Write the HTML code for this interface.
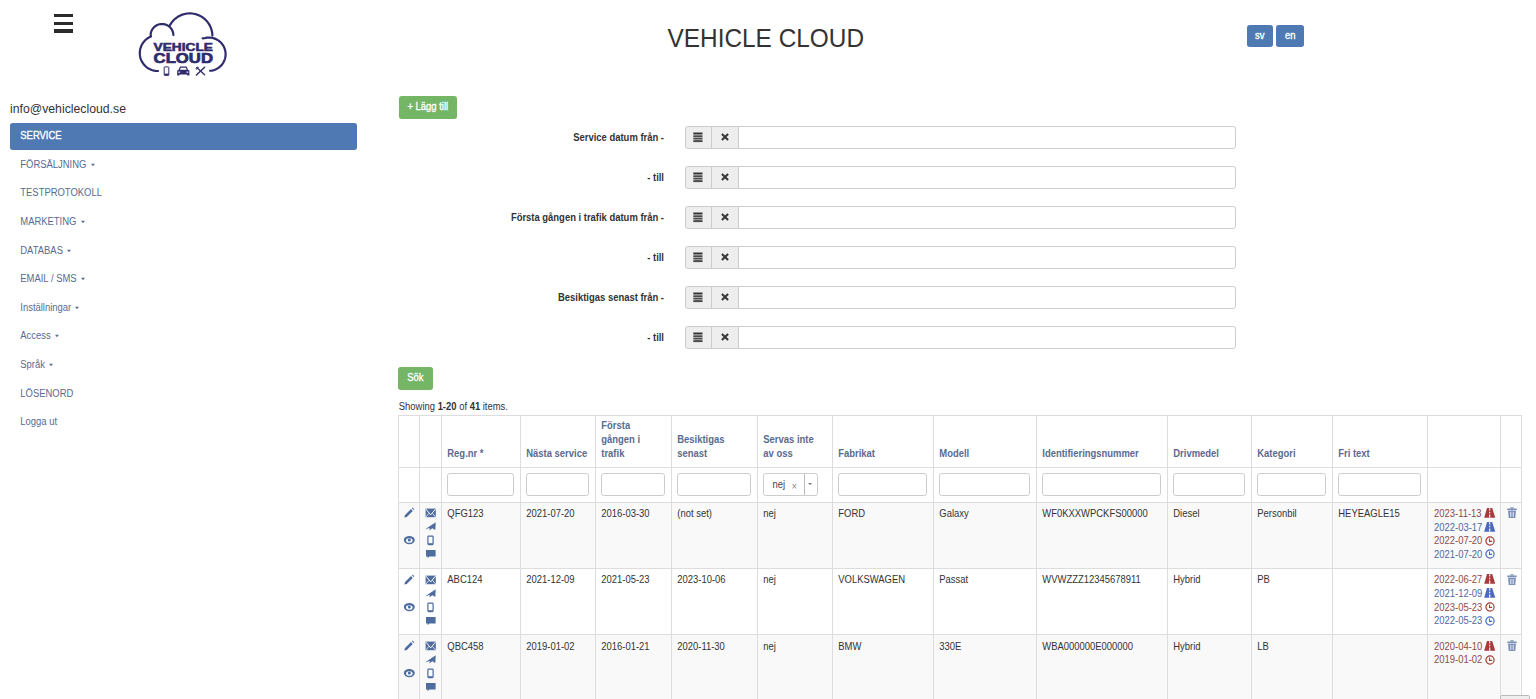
<!DOCTYPE html>
<html><head><meta charset="utf-8"><title>Vehicle Cloud</title><style>
html,body{margin:0;padding:0;background:#fff;width:1536px;height:699px;overflow:hidden;position:relative}
body{font-family:"Liberation Sans", sans-serif}
.t{position:absolute;white-space:nowrap;transform-origin:0 50%}
.r{position:absolute}
.caret{display:inline-block;width:0;height:0;margin-left:4.3px;vertical-align:middle;position:relative;top:-0.3px;border-top:2.7px solid;border-left:2.8px solid transparent;border-right:2.8px solid transparent}
.ig{position:absolute;width:551.4px;height:23px}
.ad{position:absolute;left:0;top:0;width:25.8px;height:21px;background:#eee;border:1px solid #ccc;border-radius:2.7px 0 0 2.7px}
.ad2{left:26.8px;border-radius:0}
.inp{position:absolute;left:53.6px;top:0;width:495.8px;height:21px;border:1px solid #ccc;border-radius:0 2.7px 2.7px 0;background:#fff}
.xi{position:absolute;left:7.4px;top:4.9px}
.cal{position:absolute;left:7.8px;top:5.2px}
.fi{position:absolute;height:21px;border:1px solid #ccc;border-radius:2.7px;background:#fff}
.corner{position:absolute;left:1500.4px;top:694.9px;width:28px;height:10px;background:#eee;border:1px solid #bbb;border-radius:2px}
</style></head><body>
<div class="r" style="left:54px;top:13.6px;width:19px;height:3.4px;background:#2b2b2b"></div>
<div class="r" style="left:54px;top:21.5px;width:19px;height:3.4px;background:#2b2b2b"></div>
<div class="r" style="left:54px;top:29.4px;width:19px;height:3.4px;background:#2b2b2b"></div>
<svg class="r" style="left:0;top:0" width="260" height="90" viewBox="0 0 260 90">
<g fill="none" stroke="#2f2c6c" stroke-width="2.2" stroke-linecap="round" stroke-linejoin="round">
<polyline points="158.01,71.00 156.77,70.98 155.53,70.87 154.31,70.68 153.10,70.40 151.91,70.04 150.75,69.60 149.62,69.07 148.53,68.48 147.49,67.80 146.50,67.06 145.56,66.25 144.67,65.38 143.85,64.44 143.10,63.46 142.42,62.42 141.81,61.34 141.28,60.22 140.82,59.06 140.45,57.88 140.16,56.67 139.95,55.44 139.83,54.21 139.80,52.97 139.85,51.73 139.99,50.49 140.21,49.27 140.52,48.07 140.91,46.89 141.38,45.74 141.93,44.63 142.56,43.55 143.26,42.53 144.02,41.55 144.86,40.63 145.75,39.77 146.70,38.98 147.71,38.25 148.76,37.59 149.86,37.01 150.99,36.50 150.62,34.80 150.69,33.94 150.84,33.08 151.05,32.23 151.32,31.41 151.66,30.60 152.05,29.83 152.51,29.09 153.02,28.38 153.58,27.72 154.19,27.10 154.85,26.52 155.54,26.00 156.28,25.54 157.05,25.13 157.85,24.78 158.67,24.50 159.51,24.28 160.36,24.12 161.23,24.03 162.10,24.00 162.97,24.04 163.83,24.15 164.69,24.32 165.52,24.56 166.34,24.86 167.13,25.22 167.89,25.64 168.62,26.12 169.31,26.65 169.95,27.23 170.55,27.86 171.10,28.54 171.60,29.25 172.04,30.00 172.42,30.79 172.75,31.59 173.01,32.43 173.20,33.27 173.33,34.13 173.39,35.00"/>
<polyline points="169.85,25.39 170.59,24.10 171.41,22.86 172.32,21.68 173.30,20.56 174.35,19.51 175.47,18.52 176.65,17.62 177.89,16.79 179.18,16.05 180.52,15.39 181.89,14.83 183.31,14.35 184.74,13.97 186.21,13.69 187.68,13.50 189.17,13.41 190.66,13.42 192.14,13.52 193.62,13.72 195.08,14.02 196.51,14.42 197.92,14.91 199.29,15.49 200.62,16.16 201.90,16.91 203.13,17.75 204.30,18.67 205.41,19.66 206.46,20.72 207.43,21.85 208.32,23.05 209.13,24.29 209.86,25.59 210.50,26.93 211.05,28.32 211.51,29.73 211.88,31.18 212.15,32.64 212.32,34.12 212.40,35.61"/>
<polyline points="202.6,38.3 204.42,38.24 205.78,37.92 207.15,37.70 208.54,37.61 209.93,37.63 211.31,37.76 212.68,38.01 214.02,38.38 215.33,38.85 216.59,39.44 217.80,40.12 218.94,40.91 220.02,41.79 221.02,42.75 221.94,43.80 222.76,44.92 223.49,46.10 224.12,47.34 224.64,48.63 225.05,49.96 225.35,51.32 225.53,52.70 225.60,54.08 225.55,55.47 225.39,56.85 225.11,58.22 224.71,59.55 224.21,60.85 223.60,62.10 222.89,63.29 222.08,64.42 221.18,65.48 220.19,66.46 219.13,67.35 217.99,68.15 216.79,68.86 215.54,69.46 214.24,69.95 212.90,70.33 211.54,70.60 210.16,70.76"/>
</g>
<g fill="#2f2c6c" font-family="Liberation Sans" font-weight="bold" stroke="#2f2c6c">
<text x="153.6" y="50.6" font-size="10.6" textLength="59.4" lengthAdjust="spacingAndGlyphs" stroke-width="0.55">VEHICLE</text>
<text x="153.6" y="62.6" font-size="13.9" textLength="59.4" lengthAdjust="spacingAndGlyphs" stroke-width="0.7">CLOUD</text>
</g>
<rect x="164.2" y="66.9" width="4.6" height="8.4" rx="0.6" fill="none" stroke="#2f2c6c" stroke-width="1.0"/>
<rect x="164.2" y="73.6" width="4.6" height="1.8" fill="#2f2c6c"/>
<path fill="#2f2c6c" d="M177.2,75.6 V70.6 L178.6,69.8 L180.0,66.6 H186.6 L188.0,69.8 L189.4,70.6 V75.6 H187.2 V74.6 H179.4 V75.6 Z M179.8,69.8 H186.8 L185.8,67.7 H180.8 Z"/>
<rect x="178.3" y="71.6" width="1.8" height="1.1" fill="#fff"/><rect x="186.5" y="71.6" width="1.8" height="1.1" fill="#fff"/>
<g stroke="#2f2c6c" stroke-linecap="round">
<line x1="196.4" y1="75.0" x2="204.6" y2="67.2" stroke-width="1.5"/>
<line x1="196.8" y1="67.6" x2="204.6" y2="74.8" stroke-width="1.3"/>
<path d="M195.9,68.8 L197.4,66.9 M196.6,69.4 L198.4,67.6" stroke-width="0.9"/>
</g>
</svg>
<div class="t" style="left:667.50px;top:31.50px;font-size:24.4px;line-height:14px;color:#333;font-weight:normal;transform:scaleY(1.04);">VEHICLE CLOUD</div>
<div class="r" style="left:1246.6px;top:24.6px;width:26.3px;height:22.6px;background:#4f79b2;border-radius:2.7px"></div>
<div class="r" style="left:1276px;top:24.6px;width:28.4px;height:22.6px;background:#4f79b2;border-radius:2.7px"></div>
<div class="t" style="left:1059.80px;width:400px;text-align:center;top:28.98px;font-size:9.45px;line-height:14px;color:#fff;font-weight:normal;-webkit-text-stroke:0.3px #fff;transform:scaleY(1.13);">sv</div>
<div class="t" style="left:1090.20px;width:400px;text-align:center;top:28.98px;font-size:9.45px;line-height:14px;color:#fff;font-weight:normal;-webkit-text-stroke:0.3px #fff;transform:scaleY(1.13);">en</div>
<div class="t" style="left:10.00px;top:101.51px;font-size:12.25px;line-height:14px;color:#333;font-weight:normal;transform:scaleY(1.06);">info@vehiclecloud.se</div>
<div class="r" style="left:10px;top:122.8px;width:347px;height:26.8px;background:#4f79b2;border-radius:2.7px"></div>
<div class="t" style="left:20.30px;top:129.08px;font-size:9.45px;line-height:14px;color:#fff;font-weight:normal;-webkit-text-stroke:0.3px #fff;transform:scaleY(1.13);">SERVICE</div>
<div class="t" style="left:20.30px;top:157.70px;font-size:9.45px;line-height:14px;color:#596b90;font-weight:normal;transform:scaleY(1.13);">FÖRSÄLJNING<span class="caret"></span></div>
<div class="t" style="left:20.30px;top:186.32px;font-size:9.45px;line-height:14px;color:#596b90;font-weight:normal;transform:scaleY(1.13);">TESTPROTOKOLL</div>
<div class="t" style="left:20.30px;top:214.94px;font-size:9.45px;line-height:14px;color:#596b90;font-weight:normal;transform:scaleY(1.13);">MARKETING<span class="caret"></span></div>
<div class="t" style="left:20.30px;top:243.56px;font-size:9.45px;line-height:14px;color:#596b90;font-weight:normal;transform:scaleY(1.13);">DATABAS<span class="caret"></span></div>
<div class="t" style="left:20.30px;top:272.18px;font-size:9.45px;line-height:14px;color:#596b90;font-weight:normal;transform:scaleY(1.13);">EMAIL / SMS<span class="caret"></span></div>
<div class="t" style="left:20.30px;top:300.80px;font-size:9.45px;line-height:14px;color:#596b90;font-weight:normal;transform:scaleY(1.13);">Inställningar<span class="caret"></span></div>
<div class="t" style="left:20.30px;top:329.42px;font-size:9.45px;line-height:14px;color:#596b90;font-weight:normal;transform:scaleY(1.13);">Access<span class="caret"></span></div>
<div class="t" style="left:20.30px;top:358.04px;font-size:9.45px;line-height:14px;color:#596b90;font-weight:normal;transform:scaleY(1.13);">Språk<span class="caret"></span></div>
<div class="t" style="left:20.30px;top:386.66px;font-size:9.45px;line-height:14px;color:#596b90;font-weight:normal;transform:scaleY(1.13);">LÖSENORD</div>
<div class="t" style="left:20.30px;top:415.28px;font-size:9.45px;line-height:14px;color:#596b90;font-weight:normal;transform:scaleY(1.13);">Logga ut</div>
<div class="r" style="left:398.6px;top:95.7px;width:58.4px;height:23.2px;background:#74b566;border-radius:2.7px"></div>
<div class="t" style="left:227.80px;width:400px;text-align:center;top:100.28px;font-size:9.45px;line-height:14px;color:#fff;font-weight:normal;-webkit-text-stroke:0.3px #fff;transform:scaleY(1.13);">+ Lägg till</div>
<div class="t" style="right:872.00px;text-align:right;top:130.98px;font-size:9.45px;line-height:14px;color:#333;font-weight:bold;transform:scaleY(1.13);">Service datum från -</div>
<div class="ig" style="left:684.6px;top:126.00px"><div class="ad"><svg class="cal" width="10" height="11" viewBox="0 0 10 11"><rect x="0.3" y="0.5" width="9.2" height="2.0" fill="#333"/><rect x="0.3" y="3.3" width="9.2" height="1.8" fill="#4a4a4a"/><rect x="0.3" y="5.7" width="9.2" height="1.8" fill="#4a4a4a"/><rect x="0.3" y="8.1" width="9.2" height="2.0" fill="#4a4a4a"/></svg></div><div class="ad ad2"><svg class="xi" width="10" height="10" viewBox="0 0 10 10"><path d="M1.9,1.9 L8.1,8.1 M8.1,1.9 L1.9,8.1" stroke="#383838" stroke-width="2.1"/></svg></div><div class="inp"></div></div>
<div class="t" style="right:872.00px;text-align:right;top:170.98px;font-size:9.45px;line-height:14px;color:#333;font-weight:bold;transform:scaleY(1.13);">- till</div>
<div class="ig" style="left:684.6px;top:166.00px"><div class="ad"><svg class="cal" width="10" height="11" viewBox="0 0 10 11"><rect x="0.3" y="0.5" width="9.2" height="2.0" fill="#333"/><rect x="0.3" y="3.3" width="9.2" height="1.8" fill="#4a4a4a"/><rect x="0.3" y="5.7" width="9.2" height="1.8" fill="#4a4a4a"/><rect x="0.3" y="8.1" width="9.2" height="2.0" fill="#4a4a4a"/></svg></div><div class="ad ad2"><svg class="xi" width="10" height="10" viewBox="0 0 10 10"><path d="M1.9,1.9 L8.1,8.1 M8.1,1.9 L1.9,8.1" stroke="#383838" stroke-width="2.1"/></svg></div><div class="inp"></div></div>
<div class="t" style="right:872.00px;text-align:right;top:210.98px;font-size:9.45px;line-height:14px;color:#333;font-weight:bold;transform:scaleY(1.13);">Första gången i trafik datum från -</div>
<div class="ig" style="left:684.6px;top:206.00px"><div class="ad"><svg class="cal" width="10" height="11" viewBox="0 0 10 11"><rect x="0.3" y="0.5" width="9.2" height="2.0" fill="#333"/><rect x="0.3" y="3.3" width="9.2" height="1.8" fill="#4a4a4a"/><rect x="0.3" y="5.7" width="9.2" height="1.8" fill="#4a4a4a"/><rect x="0.3" y="8.1" width="9.2" height="2.0" fill="#4a4a4a"/></svg></div><div class="ad ad2"><svg class="xi" width="10" height="10" viewBox="0 0 10 10"><path d="M1.9,1.9 L8.1,8.1 M8.1,1.9 L1.9,8.1" stroke="#383838" stroke-width="2.1"/></svg></div><div class="inp"></div></div>
<div class="t" style="right:872.00px;text-align:right;top:250.98px;font-size:9.45px;line-height:14px;color:#333;font-weight:bold;transform:scaleY(1.13);">- till</div>
<div class="ig" style="left:684.6px;top:246.00px"><div class="ad"><svg class="cal" width="10" height="11" viewBox="0 0 10 11"><rect x="0.3" y="0.5" width="9.2" height="2.0" fill="#333"/><rect x="0.3" y="3.3" width="9.2" height="1.8" fill="#4a4a4a"/><rect x="0.3" y="5.7" width="9.2" height="1.8" fill="#4a4a4a"/><rect x="0.3" y="8.1" width="9.2" height="2.0" fill="#4a4a4a"/></svg></div><div class="ad ad2"><svg class="xi" width="10" height="10" viewBox="0 0 10 10"><path d="M1.9,1.9 L8.1,8.1 M8.1,1.9 L1.9,8.1" stroke="#383838" stroke-width="2.1"/></svg></div><div class="inp"></div></div>
<div class="t" style="right:872.00px;text-align:right;top:290.98px;font-size:9.45px;line-height:14px;color:#333;font-weight:bold;transform:scaleY(1.13);">Besiktigas senast från -</div>
<div class="ig" style="left:684.6px;top:286.00px"><div class="ad"><svg class="cal" width="10" height="11" viewBox="0 0 10 11"><rect x="0.3" y="0.5" width="9.2" height="2.0" fill="#333"/><rect x="0.3" y="3.3" width="9.2" height="1.8" fill="#4a4a4a"/><rect x="0.3" y="5.7" width="9.2" height="1.8" fill="#4a4a4a"/><rect x="0.3" y="8.1" width="9.2" height="2.0" fill="#4a4a4a"/></svg></div><div class="ad ad2"><svg class="xi" width="10" height="10" viewBox="0 0 10 10"><path d="M1.9,1.9 L8.1,8.1 M8.1,1.9 L1.9,8.1" stroke="#383838" stroke-width="2.1"/></svg></div><div class="inp"></div></div>
<div class="t" style="right:872.00px;text-align:right;top:330.98px;font-size:9.45px;line-height:14px;color:#333;font-weight:bold;transform:scaleY(1.13);">- till</div>
<div class="ig" style="left:684.6px;top:326.00px"><div class="ad"><svg class="cal" width="10" height="11" viewBox="0 0 10 11"><rect x="0.3" y="0.5" width="9.2" height="2.0" fill="#333"/><rect x="0.3" y="3.3" width="9.2" height="1.8" fill="#4a4a4a"/><rect x="0.3" y="5.7" width="9.2" height="1.8" fill="#4a4a4a"/><rect x="0.3" y="8.1" width="9.2" height="2.0" fill="#4a4a4a"/></svg></div><div class="ad ad2"><svg class="xi" width="10" height="10" viewBox="0 0 10 10"><path d="M1.9,1.9 L8.1,8.1 M8.1,1.9 L1.9,8.1" stroke="#383838" stroke-width="2.1"/></svg></div><div class="inp"></div></div>
<div class="r" style="left:398.2px;top:367.2px;width:34.4px;height:22.6px;background:#74b566;border-radius:2.7px"></div>
<div class="t" style="left:215.40px;width:400px;text-align:center;top:371.38px;font-size:9.45px;line-height:14px;color:#fff;font-weight:normal;-webkit-text-stroke:0.3px #fff;transform:scaleY(1.13);">Sök</div>
<div class="t" style="left:398.80px;top:399.78px;font-size:9.45px;line-height:14px;color:#333;font-weight:normal;transform:scaleY(1.13);">Showing <b>1-20</b> of <b>41</b> items.</div>
<div class="r" style="left:398px;top:502px;width:1122px;height:66px;background:#f9f9f9"></div>
<div class="r" style="left:398px;top:634px;width:1122px;height:70px;background:#f9f9f9"></div>
<div class="r" style="left:398px;top:415px;width:1px;height:289px;background:#ddd"></div>
<div class="r" style="left:419px;top:415px;width:1px;height:289px;background:#ddd"></div>
<div class="r" style="left:441px;top:415px;width:1px;height:289px;background:#ddd"></div>
<div class="r" style="left:520px;top:415px;width:1px;height:289px;background:#ddd"></div>
<div class="r" style="left:595px;top:415px;width:1px;height:289px;background:#ddd"></div>
<div class="r" style="left:671px;top:415px;width:1px;height:289px;background:#ddd"></div>
<div class="r" style="left:757px;top:415px;width:1px;height:289px;background:#ddd"></div>
<div class="r" style="left:832px;top:415px;width:1px;height:289px;background:#ddd"></div>
<div class="r" style="left:933px;top:415px;width:1px;height:289px;background:#ddd"></div>
<div class="r" style="left:1036px;top:415px;width:1px;height:289px;background:#ddd"></div>
<div class="r" style="left:1167px;top:415px;width:1px;height:289px;background:#ddd"></div>
<div class="r" style="left:1251px;top:415px;width:1px;height:289px;background:#ddd"></div>
<div class="r" style="left:1332px;top:415px;width:1px;height:289px;background:#ddd"></div>
<div class="r" style="left:1427px;top:415px;width:1px;height:289px;background:#ddd"></div>
<div class="r" style="left:1500px;top:415px;width:1px;height:289px;background:#ddd"></div>
<div class="r" style="left:1521px;top:415px;width:1px;height:289px;background:#ddd"></div>
<div class="r" style="left:398px;top:415px;width:1124px;height:1px;background:#ddd"></div>
<div class="r" style="left:398px;top:467px;width:1124px;height:1px;background:#ddd"></div>
<div class="r" style="left:398px;top:502px;width:1124px;height:1px;background:#ddd"></div>
<div class="r" style="left:398px;top:568px;width:1124px;height:1px;background:#ddd"></div>
<div class="r" style="left:398px;top:634px;width:1124px;height:1px;background:#ddd"></div>
<div class="t" style="left:447.30px;top:447.28px;font-size:9.45px;line-height:14px;color:#596b90;font-weight:bold;transform:scaleY(1.13);">Reg.nr *</div>
<div class="t" style="left:526.30px;top:447.28px;font-size:9.45px;line-height:14px;color:#596b90;font-weight:bold;transform:scaleY(1.13);">Nästa service</div>
<div class="t" style="left:601.30px;top:419.28px;font-size:9.45px;line-height:14px;color:#596b90;font-weight:bold;transform:scaleY(1.13);">Första</div>
<div class="t" style="left:601.30px;top:433.28px;font-size:9.45px;line-height:14px;color:#596b90;font-weight:bold;transform:scaleY(1.13);">gången i</div>
<div class="t" style="left:601.30px;top:447.28px;font-size:9.45px;line-height:14px;color:#596b90;font-weight:bold;transform:scaleY(1.13);">trafik</div>
<div class="t" style="left:677.30px;top:433.28px;font-size:9.45px;line-height:14px;color:#596b90;font-weight:bold;transform:scaleY(1.13);">Besiktigas</div>
<div class="t" style="left:677.30px;top:447.28px;font-size:9.45px;line-height:14px;color:#596b90;font-weight:bold;transform:scaleY(1.13);">senast</div>
<div class="t" style="left:763.30px;top:433.28px;font-size:9.45px;line-height:14px;color:#596b90;font-weight:bold;transform:scaleY(1.13);">Servas inte</div>
<div class="t" style="left:763.30px;top:447.28px;font-size:9.45px;line-height:14px;color:#596b90;font-weight:bold;transform:scaleY(1.13);">av oss</div>
<div class="t" style="left:838.30px;top:447.28px;font-size:9.45px;line-height:14px;color:#596b90;font-weight:bold;transform:scaleY(1.13);">Fabrikat</div>
<div class="t" style="left:939.30px;top:447.28px;font-size:9.45px;line-height:14px;color:#596b90;font-weight:bold;transform:scaleY(1.13);">Modell</div>
<div class="t" style="left:1042.30px;top:447.28px;font-size:9.45px;line-height:14px;color:#596b90;font-weight:bold;transform:scaleY(1.13);">Identifieringsnummer</div>
<div class="t" style="left:1173.30px;top:447.28px;font-size:9.45px;line-height:14px;color:#596b90;font-weight:bold;transform:scaleY(1.13);">Drivmedel</div>
<div class="t" style="left:1257.30px;top:447.28px;font-size:9.45px;line-height:14px;color:#596b90;font-weight:bold;transform:scaleY(1.13);">Kategori</div>
<div class="t" style="left:1338.30px;top:447.28px;font-size:9.45px;line-height:14px;color:#596b90;font-weight:bold;transform:scaleY(1.13);">Fri text</div>
<div class="fi" style="left:446.8px;top:473px;width:65.6px"></div>
<div class="fi" style="left:525.8px;top:473px;width:61.6px"></div>
<div class="fi" style="left:600.8px;top:473px;width:62.6px"></div>
<div class="fi" style="left:676.8px;top:473px;width:72.6px"></div>
<div class="fi" style="left:837.8px;top:473px;width:87.6px"></div>
<div class="fi" style="left:938.8px;top:473px;width:89.6px"></div>
<div class="fi" style="left:1041.8px;top:473px;width:117.6px"></div>
<div class="fi" style="left:1172.8px;top:473px;width:70.6px"></div>
<div class="fi" style="left:1256.8px;top:473px;width:67.6px"></div>
<div class="fi" style="left:1337.8px;top:473px;width:81.6px"></div>
<div class="fi" style="left:763.3px;top:473px;width:52.6px"></div>
<div class="r" style="left:804px;top:474px;width:1px;height:21px;background:#bbb"></div>
<div class="t" style="left:772.60px;top:477.58px;font-size:9.45px;line-height:14px;color:#444;font-weight:normal;transform:scaleY(1.13);">nej</div>
<div class="t" style="left:791.60px;top:479.76px;font-size:9.5px;line-height:14px;color:#888;font-weight:normal;transform:scaleY(1.13);">&#215;</div>
<div class="r" style="left:808.3px;top:483.2px;width:0;height:0;border-left:2.2px solid transparent;border-right:2.2px solid transparent;border-top:2.6px solid #777"></div>
<div class="t" style="left:447.30px;top:507.08px;font-size:9.45px;line-height:14px;color:#333;font-weight:normal;transform:scaleY(1.13);">QFG123</div>
<div class="t" style="left:526.30px;top:507.08px;font-size:9.45px;line-height:14px;color:#333;font-weight:normal;transform:scaleY(1.13);">2021-07-20</div>
<div class="t" style="left:601.30px;top:507.08px;font-size:9.45px;line-height:14px;color:#333;font-weight:normal;transform:scaleY(1.13);">2016-03-30</div>
<div class="t" style="left:677.30px;top:507.08px;font-size:9.45px;line-height:14px;color:#333;font-weight:normal;transform:scaleY(1.13);">(not set)</div>
<div class="t" style="left:763.30px;top:507.08px;font-size:9.45px;line-height:14px;color:#333;font-weight:normal;transform:scaleY(1.13);">nej</div>
<div class="t" style="left:838.30px;top:507.08px;font-size:9.45px;line-height:14px;color:#333;font-weight:normal;transform:scaleY(1.13);">FORD</div>
<div class="t" style="left:939.30px;top:507.08px;font-size:9.45px;line-height:14px;color:#333;font-weight:normal;transform:scaleY(1.13);">Galaxy</div>
<div class="t" style="left:1042.30px;top:507.08px;font-size:9.45px;line-height:14px;color:#333;font-weight:normal;transform:scaleY(1.13);">WF0KXXWPCKFS00000</div>
<div class="t" style="left:1173.30px;top:507.08px;font-size:9.45px;line-height:14px;color:#333;font-weight:normal;transform:scaleY(1.13);">Diesel</div>
<div class="t" style="left:1257.30px;top:507.08px;font-size:9.45px;line-height:14px;color:#333;font-weight:normal;transform:scaleY(1.13);">Personbil</div>
<div class="t" style="left:1338.30px;top:507.08px;font-size:9.45px;line-height:14px;color:#333;font-weight:normal;transform:scaleY(1.13);">HEYEAGLE15</div>
<svg class="r" style="left:398px;top:502.3px" width="44" height="66" viewBox="0 0 44 66"><g fill="#4e6c9e"><path d="M6.3,15.6 L7.0,13.1 L13.0,7.1 L14.8,8.9 L8.8,14.9 Z M13.9,6.2 L14.6,5.5 L16.4,7.3 L15.7,8.0 Z"/><ellipse cx="11.3" cy="38.1" rx="5.5" ry="4.1"/><rect x="27.6" y="6.6" width="10.2" height="8.6"/><path d="M27.2,27.2 L37.7,20.2 L37.3,28.1 L34.3,26.3 L31.4,28.4 L31.8,26.0 Z"/><path d="M28.0,48.0 H37.6 V54.4 H31.4 L29.6,56.2 V54.4 H28.0 Z"/></g><ellipse cx="11.3" cy="38.5" rx="3.3" ry="2.3" fill="#f9f9f9"/><circle cx="11.3" cy="38.0" r="1.5" fill="#4e6c9e"/><path d="M27.9,7.1 L32.7,12.9 L37.5,7.1" stroke="#f9f9f9" stroke-width="1.0" fill="none"/><path d="M27.9,15.0 L30.9,11.4 M37.5,15.0 L34.5,11.4" stroke="#f9f9f9" stroke-width="0.8" fill="none"/><rect x="29.9" y="34.2" width="5.2" height="8.4" rx="0.8" fill="none" stroke="#4e6c9e" stroke-width="1.2"/><rect x="30.2" y="41.2" width="4.6" height="1.4" fill="#4e6c9e"/></svg>
<div class="t" style="left:1434.00px;top:507.08px;font-size:9.45px;line-height:14px;color:#8f4a4a;font-weight:normal;transform:scaleY(1.13);">2023-11-13</div>
<svg class="r" style="left:1483.6px;top:508.1px" width="12" height="10" viewBox="0 0 12 10"><path d="M3.0,0 H8.2 L11.2,9.7 H0.2 Z" fill="#a83a3a"/><path d="M5.7,0.2 V2.6 M5.7,3.8 V5.2 M5.7,6.4 V9.7" stroke="#f9f9f9" stroke-width="1.2"/></svg>
<div class="t" style="left:1434.00px;top:520.68px;font-size:9.45px;line-height:14px;color:#5068a0;font-weight:normal;transform:scaleY(1.13);">2022-03-17</div>
<svg class="r" style="left:1483.6px;top:521.7px" width="12" height="10" viewBox="0 0 12 10"><path d="M3.0,0 H8.2 L11.2,9.7 H0.2 Z" fill="#4a68c0"/><path d="M5.7,0.2 V2.6 M5.7,3.8 V5.2 M5.7,6.4 V9.7" stroke="#f9f9f9" stroke-width="1.2"/></svg>
<div class="t" style="left:1434.00px;top:534.28px;font-size:9.45px;line-height:14px;color:#8f4a4a;font-weight:normal;transform:scaleY(1.13);">2022-07-20</div>
<svg class="r" style="left:1484.8px;top:535.8px" width="10" height="10" viewBox="0 0 10 10"><circle cx="5" cy="5" r="4.1" fill="none" stroke="#a83a3a" stroke-width="1.2"/><path d="M4.5,2.5 V5.4 H7.1" fill="none" stroke="#a83a3a" stroke-width="1.1"/></svg>
<div class="t" style="left:1434.00px;top:547.88px;font-size:9.45px;line-height:14px;color:#5068a0;font-weight:normal;transform:scaleY(1.13);">2021-07-20</div>
<svg class="r" style="left:1484.8px;top:549.4px" width="10" height="10" viewBox="0 0 10 10"><circle cx="5" cy="5" r="4.1" fill="none" stroke="#4a68c0" stroke-width="1.2"/><path d="M4.5,2.5 V5.4 H7.1" fill="none" stroke="#4a68c0" stroke-width="1.1"/></svg>
<svg class="r" style="left:1506.8px;top:507.3px" width="10" height="12" viewBox="0 0 10 12"><g fill="#7b8fb8"><rect x="3.4" y="0.3" width="3.2" height="1.3"/><rect x="0.3" y="1.5" width="9.4" height="1.7"/><path d="M1.1,3.8 H8.9 L8.3,10.9 H1.7 Z"/></g><g stroke="#f9f9f9" stroke-width="0.6"><line x1="3.5" y1="5" x2="3.5" y2="10"/><line x1="5" y1="5" x2="5" y2="10"/><line x1="6.5" y1="5" x2="6.5" y2="10"/></g></svg>
<div class="t" style="left:447.30px;top:573.38px;font-size:9.45px;line-height:14px;color:#333;font-weight:normal;transform:scaleY(1.13);">ABC124</div>
<div class="t" style="left:526.30px;top:573.38px;font-size:9.45px;line-height:14px;color:#333;font-weight:normal;transform:scaleY(1.13);">2021-12-09</div>
<div class="t" style="left:601.30px;top:573.38px;font-size:9.45px;line-height:14px;color:#333;font-weight:normal;transform:scaleY(1.13);">2021-05-23</div>
<div class="t" style="left:677.30px;top:573.38px;font-size:9.45px;line-height:14px;color:#333;font-weight:normal;transform:scaleY(1.13);">2023-10-06</div>
<div class="t" style="left:763.30px;top:573.38px;font-size:9.45px;line-height:14px;color:#333;font-weight:normal;transform:scaleY(1.13);">nej</div>
<div class="t" style="left:838.30px;top:573.38px;font-size:9.45px;line-height:14px;color:#333;font-weight:normal;transform:scaleY(1.13);">VOLKSWAGEN</div>
<div class="t" style="left:939.30px;top:573.38px;font-size:9.45px;line-height:14px;color:#333;font-weight:normal;transform:scaleY(1.13);">Passat</div>
<div class="t" style="left:1042.30px;top:573.38px;font-size:9.45px;line-height:14px;color:#333;font-weight:normal;transform:scaleY(1.13);">WVWZZZ12345678911</div>
<div class="t" style="left:1173.30px;top:573.38px;font-size:9.45px;line-height:14px;color:#333;font-weight:normal;transform:scaleY(1.13);">Hybrid</div>
<div class="t" style="left:1257.30px;top:573.38px;font-size:9.45px;line-height:14px;color:#333;font-weight:normal;transform:scaleY(1.13);">PB</div>
<svg class="r" style="left:398px;top:568.6px" width="44" height="66" viewBox="0 0 44 66"><g fill="#4e6c9e"><path d="M6.3,15.6 L7.0,13.1 L13.0,7.1 L14.8,8.9 L8.8,14.9 Z M13.9,6.2 L14.6,5.5 L16.4,7.3 L15.7,8.0 Z"/><ellipse cx="11.3" cy="38.1" rx="5.5" ry="4.1"/><rect x="27.6" y="6.6" width="10.2" height="8.6"/><path d="M27.2,27.2 L37.7,20.2 L37.3,28.1 L34.3,26.3 L31.4,28.4 L31.8,26.0 Z"/><path d="M28.0,48.0 H37.6 V54.4 H31.4 L29.6,56.2 V54.4 H28.0 Z"/></g><ellipse cx="11.3" cy="38.5" rx="3.3" ry="2.3" fill="#fff"/><circle cx="11.3" cy="38.0" r="1.5" fill="#4e6c9e"/><path d="M27.9,7.1 L32.7,12.9 L37.5,7.1" stroke="#fff" stroke-width="1.0" fill="none"/><path d="M27.9,15.0 L30.9,11.4 M37.5,15.0 L34.5,11.4" stroke="#fff" stroke-width="0.8" fill="none"/><rect x="29.9" y="34.2" width="5.2" height="8.4" rx="0.8" fill="none" stroke="#4e6c9e" stroke-width="1.2"/><rect x="30.2" y="41.2" width="4.6" height="1.4" fill="#4e6c9e"/></svg>
<div class="t" style="left:1434.00px;top:573.38px;font-size:9.45px;line-height:14px;color:#8f4a4a;font-weight:normal;transform:scaleY(1.13);">2022-06-27</div>
<svg class="r" style="left:1483.6px;top:574.4px" width="12" height="10" viewBox="0 0 12 10"><path d="M3.0,0 H8.2 L11.2,9.7 H0.2 Z" fill="#a83a3a"/><path d="M5.7,0.2 V2.6 M5.7,3.8 V5.2 M5.7,6.4 V9.7" stroke="#fff" stroke-width="1.2"/></svg>
<div class="t" style="left:1434.00px;top:586.98px;font-size:9.45px;line-height:14px;color:#5068a0;font-weight:normal;transform:scaleY(1.13);">2021-12-09</div>
<svg class="r" style="left:1483.6px;top:588.0px" width="12" height="10" viewBox="0 0 12 10"><path d="M3.0,0 H8.2 L11.2,9.7 H0.2 Z" fill="#4a68c0"/><path d="M5.7,0.2 V2.6 M5.7,3.8 V5.2 M5.7,6.4 V9.7" stroke="#fff" stroke-width="1.2"/></svg>
<div class="t" style="left:1434.00px;top:600.58px;font-size:9.45px;line-height:14px;color:#8f4a4a;font-weight:normal;transform:scaleY(1.13);">2023-05-23</div>
<svg class="r" style="left:1484.8px;top:602.1px" width="10" height="10" viewBox="0 0 10 10"><circle cx="5" cy="5" r="4.1" fill="none" stroke="#a83a3a" stroke-width="1.2"/><path d="M4.5,2.5 V5.4 H7.1" fill="none" stroke="#a83a3a" stroke-width="1.1"/></svg>
<div class="t" style="left:1434.00px;top:614.18px;font-size:9.45px;line-height:14px;color:#5068a0;font-weight:normal;transform:scaleY(1.13);">2022-05-23</div>
<svg class="r" style="left:1484.8px;top:615.7px" width="10" height="10" viewBox="0 0 10 10"><circle cx="5" cy="5" r="4.1" fill="none" stroke="#4a68c0" stroke-width="1.2"/><path d="M4.5,2.5 V5.4 H7.1" fill="none" stroke="#4a68c0" stroke-width="1.1"/></svg>
<svg class="r" style="left:1506.8px;top:573.6px" width="10" height="12" viewBox="0 0 10 12"><g fill="#7b8fb8"><rect x="3.4" y="0.3" width="3.2" height="1.3"/><rect x="0.3" y="1.5" width="9.4" height="1.7"/><path d="M1.1,3.8 H8.9 L8.3,10.9 H1.7 Z"/></g><g stroke="#fff" stroke-width="0.6"><line x1="3.5" y1="5" x2="3.5" y2="10"/><line x1="5" y1="5" x2="5" y2="10"/><line x1="6.5" y1="5" x2="6.5" y2="10"/></g></svg>
<div class="t" style="left:447.30px;top:639.68px;font-size:9.45px;line-height:14px;color:#333;font-weight:normal;transform:scaleY(1.13);">QBC458</div>
<div class="t" style="left:526.30px;top:639.68px;font-size:9.45px;line-height:14px;color:#333;font-weight:normal;transform:scaleY(1.13);">2019-01-02</div>
<div class="t" style="left:601.30px;top:639.68px;font-size:9.45px;line-height:14px;color:#333;font-weight:normal;transform:scaleY(1.13);">2016-01-21</div>
<div class="t" style="left:677.30px;top:639.68px;font-size:9.45px;line-height:14px;color:#333;font-weight:normal;transform:scaleY(1.13);">2020-11-30</div>
<div class="t" style="left:763.30px;top:639.68px;font-size:9.45px;line-height:14px;color:#333;font-weight:normal;transform:scaleY(1.13);">nej</div>
<div class="t" style="left:838.30px;top:639.68px;font-size:9.45px;line-height:14px;color:#333;font-weight:normal;transform:scaleY(1.13);">BMW</div>
<div class="t" style="left:939.30px;top:639.68px;font-size:9.45px;line-height:14px;color:#333;font-weight:normal;transform:scaleY(1.13);">330E</div>
<div class="t" style="left:1042.30px;top:639.68px;font-size:9.45px;line-height:14px;color:#333;font-weight:normal;transform:scaleY(1.13);">WBA000000E000000</div>
<div class="t" style="left:1173.30px;top:639.68px;font-size:9.45px;line-height:14px;color:#333;font-weight:normal;transform:scaleY(1.13);">Hybrid</div>
<div class="t" style="left:1257.30px;top:639.68px;font-size:9.45px;line-height:14px;color:#333;font-weight:normal;transform:scaleY(1.13);">LB</div>
<svg class="r" style="left:398px;top:634.9px" width="44" height="66" viewBox="0 0 44 66"><g fill="#4e6c9e"><path d="M6.3,15.6 L7.0,13.1 L13.0,7.1 L14.8,8.9 L8.8,14.9 Z M13.9,6.2 L14.6,5.5 L16.4,7.3 L15.7,8.0 Z"/><ellipse cx="11.3" cy="38.1" rx="5.5" ry="4.1"/><rect x="27.6" y="6.6" width="10.2" height="8.6"/><path d="M27.2,27.2 L37.7,20.2 L37.3,28.1 L34.3,26.3 L31.4,28.4 L31.8,26.0 Z"/><path d="M28.0,48.0 H37.6 V54.4 H31.4 L29.6,56.2 V54.4 H28.0 Z"/></g><ellipse cx="11.3" cy="38.5" rx="3.3" ry="2.3" fill="#f9f9f9"/><circle cx="11.3" cy="38.0" r="1.5" fill="#4e6c9e"/><path d="M27.9,7.1 L32.7,12.9 L37.5,7.1" stroke="#f9f9f9" stroke-width="1.0" fill="none"/><path d="M27.9,15.0 L30.9,11.4 M37.5,15.0 L34.5,11.4" stroke="#f9f9f9" stroke-width="0.8" fill="none"/><rect x="29.9" y="34.2" width="5.2" height="8.4" rx="0.8" fill="none" stroke="#4e6c9e" stroke-width="1.2"/><rect x="30.2" y="41.2" width="4.6" height="1.4" fill="#4e6c9e"/></svg>
<div class="t" style="left:1434.00px;top:639.68px;font-size:9.45px;line-height:14px;color:#8f4a4a;font-weight:normal;transform:scaleY(1.13);">2020-04-10</div>
<svg class="r" style="left:1483.6px;top:640.7px" width="12" height="10" viewBox="0 0 12 10"><path d="M3.0,0 H8.2 L11.2,9.7 H0.2 Z" fill="#a83a3a"/><path d="M5.7,0.2 V2.6 M5.7,3.8 V5.2 M5.7,6.4 V9.7" stroke="#f9f9f9" stroke-width="1.2"/></svg>
<div class="t" style="left:1434.00px;top:653.28px;font-size:9.45px;line-height:14px;color:#8f4a4a;font-weight:normal;transform:scaleY(1.13);">2019-01-02</div>
<svg class="r" style="left:1484.8px;top:654.8px" width="10" height="10" viewBox="0 0 10 10"><circle cx="5" cy="5" r="4.1" fill="none" stroke="#a83a3a" stroke-width="1.2"/><path d="M4.5,2.5 V5.4 H7.1" fill="none" stroke="#a83a3a" stroke-width="1.1"/></svg>
<svg class="r" style="left:1506.8px;top:639.9px" width="10" height="12" viewBox="0 0 10 12"><g fill="#7b8fb8"><rect x="3.4" y="0.3" width="3.2" height="1.3"/><rect x="0.3" y="1.5" width="9.4" height="1.7"/><path d="M1.1,3.8 H8.9 L8.3,10.9 H1.7 Z"/></g><g stroke="#f9f9f9" stroke-width="0.6"><line x1="3.5" y1="5" x2="3.5" y2="10"/><line x1="5" y1="5" x2="5" y2="10"/><line x1="6.5" y1="5" x2="6.5" y2="10"/></g></svg>
<div class="corner"></div>
</body></html>
